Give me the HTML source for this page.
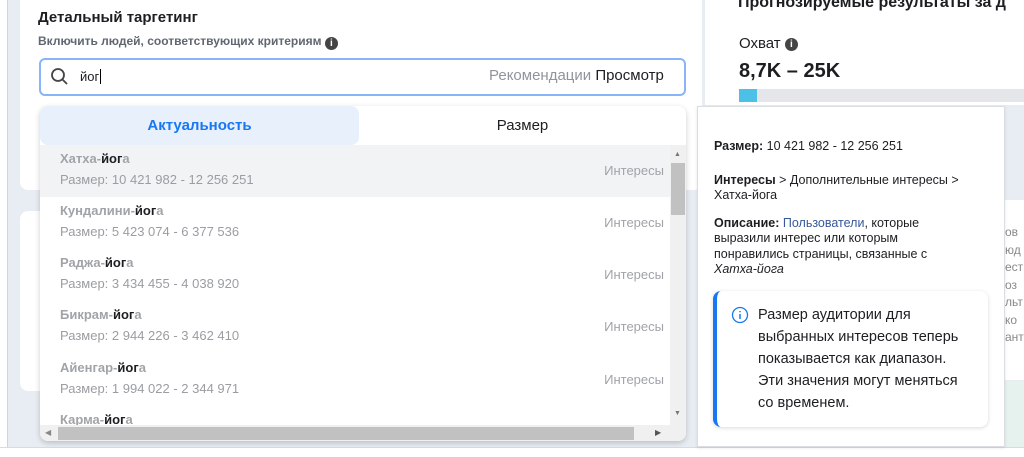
<!DOCTYPE html>
<html><head><meta charset="utf-8"><style>
*{box-sizing:border-box;margin:0;padding:0}
body{width:1024px;height:457px;overflow:hidden;background:#e8edf3;font-family:"Liberation Sans",sans-serif;position:relative}
.abs{position:absolute}
.card{background:#fff;position:absolute}
.row{position:absolute;left:40px;width:630px;height:52px}
.row .n{position:absolute;left:20px;top:6px;font-size:13px;font-weight:bold;color:#a0a3a8}
.row .n b{color:#1c1e21}
.row .s{position:absolute;left:20px;top:27px;font-size:13px;color:#9a9da2}
.row .t{position:absolute;right:6px;top:18px;font-size:13px;color:#a0a3a8}
</style></head><body>
<div class="abs" style="left:0;top:0;width:8px;height:457px;background:#fff"></div>
<div class="abs" style="left:7px;top:0;width:1px;height:447px;background:#d0d4da"></div>
<div class="card" style="left:20px;top:0;width:682px;height:190px;border-radius:0 0 8px 8px"></div>
<div class="card" style="left:20px;top:211px;width:30px;height:180px;border-radius:8px"></div>
<div class="abs" style="left:38px;top:9px;font-size:15px;font-weight:bold;color:#1c1e21">Детальный таргетинг</div>
<div class="abs" style="left:38px;top:34px;font-size:12px;font-weight:bold;color:#606770">Включить людей, соответствующих критериям <span style="display:inline-block;width:13px;height:13px;border-radius:50%;background:#444;color:#fff;font-size:10px;text-align:center;line-height:13px;vertical-align:-1px">i</span></div>
<div class="abs" style="left:39px;top:58px;width:647px;height:38px;border:2px solid #8ab4f8;border-radius:6px;background:#fff"></div>
<svg class="abs" style="left:50px;top:67px" width="20" height="20" viewBox="0 0 20 20"><circle cx="8" cy="8" r="6" fill="none" stroke="#444" stroke-width="1.8"/><path d="M12.5 12.5L17 17" stroke="#444" stroke-width="1.8"/></svg>
<div class="abs" style="left:80px;top:69px;font-size:13px;color:#1c1e21">йог<span style="border-left:1px solid #000;margin-left:1px"></span></div>
<div class="abs" style="left:489px;top:67px;font-size:15px;color:#90949c">Рекомендации <span style="color:#1c1e21">Просмотр</span></div>

<div class="card" style="left:705px;top:0;width:319px;height:105px"></div>
<div class="abs" style="left:738px;top:-6px;font-size:16px;font-weight:bold;color:#1c1e21;white-space:nowrap">Прогнозируемые результаты за д</div>
<div class="abs" style="left:739px;top:35px;font-size:15px;color:#1c1e21">Охват <span style="display:inline-block;width:13px;height:13px;border-radius:50%;background:#444;color:#fff;font-size:10px;font-weight:bold;text-align:center;line-height:13px;vertical-align:1px">i</span></div>
<div class="abs" style="left:739px;top:60px;font-size:20px;font-weight:bold;color:#1c1e21">8,7K – 25K</div>
<div class="abs" style="left:739px;top:89px;width:285px;height:13px;background:#e4e6ea"></div>
<div class="abs" style="left:739px;top:89px;width:18px;height:13px;background:#4cc0e6"></div>
<div class="card" style="left:1000px;top:200px;width:24px;height:180px"></div>
<div class="abs" style="left:1005px;top:224px;font-size:12px;line-height:17.5px;color:#888">ов<br>юд<br>ест<br>оз<br>льт<br>ко<br>ант</div>
<div class="abs" style="left:1000px;top:381px;width:24px;height:66px;background:#e6f2ee"></div>

<div class="abs" style="left:0;top:447px;width:1024px;height:10px;background:#fff;border-top:1px solid #d8dbe0"></div>

<div class="abs" style="left:40px;top:106px;width:646px;height:335px;background:#fff;border-radius:8px;box-shadow:0 2px 6px rgba(0,0,0,.2);overflow:hidden">
 <div class="abs" style="left:0;top:0;width:319px;height:39px;background:#e7f0fb;border-radius:8px"></div>
 <div class="abs" style="left:0;top:11px;width:319px;text-align:center;font-size:15px;font-weight:bold;color:#1877f2">Актуальность</div>
 <div class="abs" style="left:319px;top:11px;width:327px;text-align:center;font-size:15px;color:#1c1e21">Размер</div>
</div>
<div class="abs" style="left:40px;top:145px;width:630px;height:52px;background:#f2f3f5"></div>
<div class="row" style="top:145px"><div class="n">Хатха-<b>йог</b>а</div><div class="s">Размер: 10 421 982 - 12 256 251</div><div class="t">Интересы</div></div>
<div class="row" style="top:197px"><div class="n">Кундалини-<b>йог</b>а</div><div class="s">Размер: 5 423 074 - 6 377 536</div><div class="t">Интересы</div></div>
<div class="row" style="top:249px"><div class="n">Раджа-<b>йог</b>а</div><div class="s">Размер: 3 434 455 - 4 038 920</div><div class="t">Интересы</div></div>
<div class="row" style="top:301px"><div class="n">Бикрам-<b>йог</b>а</div><div class="s">Размер: 2 944 226 - 3 462 410</div><div class="t">Интересы</div></div>
<div class="row" style="top:354px"><div class="n">Айенгар-<b>йог</b>а</div><div class="s">Размер: 1 994 022 - 2 344 971</div><div class="t">Интересы</div></div>
<div class="row" style="top:406px;height:19px;overflow:hidden"><div class="n">Карма-<b>йог</b>а</div></div>
<div class="abs" style="left:670px;top:145px;width:16px;height:280px;background:#f0f0f0"></div>
<div class="abs" style="left:671px;top:163px;width:14px;height:52px;background:#c1c1c1"></div>
<div class="abs" style="left:674px;top:151px;font-size:7px;color:#777">▲</div>
<div class="abs" style="left:674px;top:410px;font-size:7px;color:#777">▼</div>
<div class="abs" style="left:40px;top:425px;width:646px;height:16px;background:#f0f0f0;border-radius:0 0 8px 8px"></div>
<div class="abs" style="left:58px;top:427px;width:576px;height:13px;background:#c1c1c1"></div>
<div class="abs" style="left:45px;top:428px;font-size:8px;color:#888">◀</div>
<div class="abs" style="left:655px;top:428px;font-size:8px;color:#555">▶</div>

<div class="abs" style="left:697px;top:106px;width:308px;height:341px;background:#fff;border:1px solid #dadde1;box-shadow:0 1px 3px rgba(0,0,0,.1)"></div>
<div class="abs" style="left:714px;top:139px;font-size:12.5px;color:#1c1e21"><b>Размер:</b> 10 421 982 - 12 256 251</div>
<div class="abs" style="left:714px;top:173px;width:270px;font-size:12.5px;line-height:15px;color:#1c1e21"><b>Интересы</b> &gt; Дополнительные интересы &gt; Хатха-йога</div>
<div class="abs" style="left:714px;top:216px;width:250px;font-size:12.5px;line-height:15.3px;color:#1c1e21"><b>Описание:</b> <span style="color:#385898">Пользователи</span>, которые выразили интерес или которым понравились страницы, связанные с <i>Хатха-йога</i></div>
<div class="abs" style="left:713px;top:291px;width:275px;height:136px;background:#fff;border-radius:8px;box-shadow:0 1px 4px rgba(0,0,0,.15);border-left:4px solid #1877f2"></div>
<svg class="abs" style="left:731px;top:306px" width="18" height="18" viewBox="0 0 18 18"><circle cx="9" cy="9" r="7.5" fill="none" stroke="#1877f2" stroke-width="1.3"/><path d="M9 8v5M9 5v1.2" stroke="#1877f2" stroke-width="1.5"/></svg>
<div class="abs" style="left:758px;top:304px;width:215px;font-size:14.5px;line-height:22px;color:#1c1e21">Размер аудитории для выбранных интересов теперь показывается как диапазон. Эти значения могут меняться со временем.</div>
</body></html>
